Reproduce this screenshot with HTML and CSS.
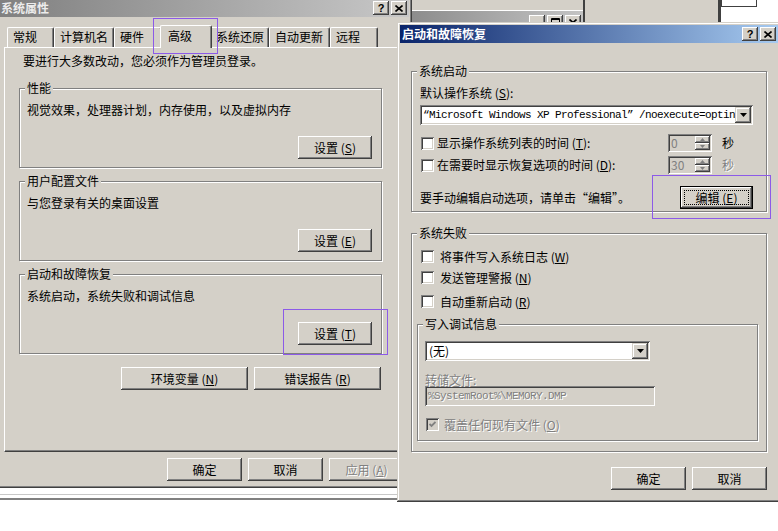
FILE: index.html
```html
<!DOCTYPE html>
<html lang="zh-CN">
<head>
    <meta charset="UTF-8">
    <meta name="viewport" content="width=device-width, initial-scale=1.0">
    <title>系统属性</title>
    <link rel="stylesheet" href="styles.css">
</head>
<body>
    <div class="desk">
        <!-- windows lying behind the two dialogs -->
        <div class="back back-gray"></div>
        <div class="back back-title">
            <span class="cap-btn"></span>
            <span class="cap-btn"><svg width="9" height="9" viewBox="0 0 9 9"><path d="M0.5 0.5h8v8h-8z M0.5 1.5h8" fill="none" stroke="#000"/></svg></span>
            <span class="cap-btn"><svg width="8" height="7" viewBox="0 0 8 7"><path d="M0.5 0.5L7.5 6.5M7.5 0.5L0.5 6.5" stroke="#000" stroke-width="1.6"/></svg></span>
        </div>
        <div class="back back-edge"></div>
        <div class="back back-frame"></div>
        <div class="back back-white"><div class="back-box"></div></div>
        <div class="back back-bottom"></div>

        <!-- 系统属性 -->
        <div class="win sys">
            <div class="titlebar inactive">
                <span class="title-text">系统属性</span>
                <span class="cap-btn">?</span>
                <span class="cap-btn"><svg width="8" height="7" viewBox="0 0 8 7"><path d="M0.5 0.5L7.5 6.5M7.5 0.5L0.5 6.5" stroke="#000" stroke-width="1.6"/></svg></span>
            </div>
            <div class="tabs">
                <div class="tab t-general">常规</div>
                <div class="tab t-name">计算机名</div>
                <div class="tab t-hw">硬件</div>
                <div class="tab t-adv active">高级</div>
                <div class="tab t-restore">系统还原</div>
                <div class="tab t-update">自动更新</div>
                <div class="tab t-remote">远程</div>
            </div>
            <div class="tab-panel">
                <p class="intro">要进行大多数改动，您必须作为管理员登录。</p>
                <div class="group adv-group first">
                    <span class="group-label">性能</span>
                    <p>视觉效果，处理器计划，内存使用，以及虚拟内存</p>
                    <div class="group-actions"><button class="btn btn-set">设置 (<u>S</u>)</button></div>
                </div>
                <div class="group adv-group">
                    <span class="group-label">用户配置文件</span>
                    <p>与您登录有关的桌面设置</p>
                    <div class="group-actions"><button class="btn btn-set">设置 (<u>E</u>)</button></div>
                </div>
                <div class="group adv-group">
                    <span class="group-label">启动和故障恢复</span>
                    <p>系统启动，系统失败和调试信息</p>
                    <div class="group-actions"><button class="btn btn-set">设置 (<u>T</u>)</button></div>
                </div>
                <div class="panel-actions">
                    <button class="btn btn-wide">环境变量 (<u>N</u>)</button>
                    <button class="btn btn-wide">错误报告 (<u>R</u>)</button>
                </div>
            </div>
            <div class="dialog-actions sys-actions">
                <button class="btn">确定</button>
                <button class="btn">取消</button>
                <button class="btn" disabled>应用 (<u>A</u>)</button>
            </div>
        </div>

        <!-- 启动和故障恢复 -->
        <div class="win recover">
            <div class="titlebar">
                <span class="title-text">启动和故障恢复</span>
                <span class="cap-btn">?</span>
                <span class="cap-btn"><svg width="8" height="7" viewBox="0 0 8 7"><path d="M0.5 0.5L7.5 6.5M7.5 0.5L0.5 6.5" stroke="#000" stroke-width="1.6"/></svg></span>
            </div>
            <div class="recover-body">
                <div class="group startup-group">
                    <span class="group-label">系统启动</span>
                    <p>默认操作系统 (<u>S</u>):</p>
                    <div class="combo os-combo">
                        <span class="combo-text mono">“Microsoft Windows XP Professional” /noexecute=optin</span>
                        <span class="drop"><svg width="7" height="4" viewBox="0 0 7 4"><path d="M0 0h7L3.5 4z" fill="#000"/></svg></span>
                    </div>
                    <div class="opt-row">
                        <span class="cb"></span>
                        <span class="opt-label">显示操作系统列表的时间 (<u>T</u>):</span>
                        <div class="spin">
                            <span class="spin-value">0</span>
                            <span class="spin-btns">
                                <span class="spin-btn"><svg width="5" height="3" viewBox="0 0 5 3"><path d="M2.5 0L5 3H0z" fill="#808080"/></svg></span>
                                <span class="spin-btn"><svg width="5" height="3" viewBox="0 0 5 3"><path d="M0 0h5L2.5 3z" fill="#808080"/></svg></span>
                            </span>
                        </div>
                        <span class="unit">秒</span>
                    </div>
                    <div class="opt-row second">
                        <span class="cb"></span>
                        <span class="opt-label">在需要时显示恢复选项的时间 (<u>D</u>):</span>
                        <div class="spin">
                            <span class="spin-value">30</span>
                            <span class="spin-btns">
                                <span class="spin-btn"><svg width="5" height="3" viewBox="0 0 5 3"><path d="M2.5 0L5 3H0z" fill="#808080"/></svg></span>
                                <span class="spin-btn"><svg width="5" height="3" viewBox="0 0 5 3"><path d="M0 0h5L2.5 3z" fill="#808080"/></svg></span>
                            </span>
                        </div>
                        <span class="unit disabled-text">秒</span>
                    </div>
                    <div class="edit-row">
                        <span>要手动编辑启动选项，请单击“编辑”。</span>
                        <button class="btn btn-default">编辑 (<u>E</u>)</button>
                    </div>
                </div>

                <div class="group failure-group">
                    <span class="group-label">系统失败</span>
                    <div class="cb-row"><span class="cb"></span><span class="cb-text">将事件写入系统日志 (<u>W</u>)</span></div>
                    <div class="cb-row alert"><span class="cb"></span><span class="cb-text">发送管理警报 (<u>N</u>)</span></div>
                    <div class="cb-row restart"><span class="cb"></span><span class="cb-text">自动重新启动 (<u>R</u>)</span></div>
                    <div class="group debug-group">
                        <span class="group-label">写入调试信息</span>
                        <div class="combo none-combo">
                            <span class="combo-text">(无)</span>
                            <span class="drop"><svg width="7" height="4" viewBox="0 0 7 4"><path d="M0 0h7L3.5 4z" fill="#000"/></svg></span>
                        </div>
                        <p class="dump-label disabled-text">转储文件:</p>
                        <div class="textbox mono disabled-text">%SystemRoot%\MEMORY.DMP</div>
                        <div class="cb-row overwrite">
                            <span class="cb checked"><svg width="7" height="7" viewBox="0 0 7 7"><path d="M0.5 3L2.5 5L6.5 1" fill="none" stroke="#808080" stroke-width="1.8"/></svg></span>
                            <span class="cb-text disabled-text">覆盖任何现有文件 (<u>O</u>)</span>
                        </div>
                    </div>
                </div>

                <div class="dialog-actions recover-actions">
                    <button class="btn">确定</button>
                    <button class="btn">取消</button>
                </div>
            </div>
        </div>

        <!-- purple highlight frames -->
        <div class="mark mark-tab"></div>
        <div class="mark mark-startup"></div>
        <div class="mark mark-edit"></div>
    </div>
</body>
</html>
```

FILE: styles.css
```css
body {
    margin: 0;
    background: #fff;
    font-family: "Noto Sans CJK SC", "Liberation Sans", sans-serif;
    font-size: 12px;
    line-height: 12px;
    color: #000;
}
p {
    margin: 0;
}
.desk {
    position: relative;
    width: 778px;
    height: 531px;
    overflow: hidden;
}

/* background windows */
.back {
    position: absolute;
}
.back-gray {
    left: 400px;
    top: 0;
    width: 320px;
    height: 24px;
    background: #d4d0c8;
}
.back-title {
    left: 410px;
    top: 10px;
    width: 173px;
    height: 14px;
    box-sizing: border-box;
    display: flex;
    justify-content: flex-end;
    padding: 4px 2px 0 0;
    border-top: 1px solid #fff;
    background: linear-gradient(to right, #8c8c8c, #c4c4c4);
}
.back-edge {
    left: 583px;
    top: 0;
    width: 2px;
    height: 24px;
    background: #404040;
}
.back-frame {
    left: 718px;
    top: 0;
    width: 3px;
    height: 24px;
    background: #404040;
}
.back-white {
    left: 721px;
    top: 0;
    width: 57px;
    height: 24px;
    background: #fff;
}
.back-box {
    width: 36px;
    height: 8px;
    margin-top: -1px;
    box-sizing: border-box;
    border: 1px solid #404040;
}
.back-bottom {
    left: 0;
    top: 494px;
    width: 397px;
    height: 6px;
    box-sizing: border-box;
    border-top: 1px solid #c8c8c8;
    border-bottom: 2px solid #808080;
}

/* window frame */
.win {
    position: absolute;
    box-sizing: border-box;
    padding: 3px;
    background: #d4d0c8;
    box-shadow: inset -1px -1px #404040, inset 1px 1px #d4d0c8, inset -2px -2px #808080, inset 2px 2px #fff;
}
.sys {
    left: -4px;
    top: -4px;
    width: 416px;
    height: 492px;
}
.recover {
    left: 397px;
    top: 22px;
    width: 384px;
    height: 480px;
}
.titlebar {
    display: flex;
    align-items: center;
    height: 18px;
    padding: 0 2px;
    background: linear-gradient(to right, #0a246a, #a6caf0);
    color: #fff;
    font-weight: bold;
}
.titlebar.inactive {
    background: linear-gradient(to right, #808080, #c8c8c8);
    color: #ececec;
}
.title-text {
    flex: 1;
}
.cap-btn {
    display: flex;
    align-items: center;
    justify-content: center;
    width: 16px;
    height: 14px;
    margin-left: 2px;
    box-sizing: border-box;
    background: #d4d0c8;
    color: #000;
    font: bold 11px/11px "Liberation Sans", sans-serif;
    box-shadow: inset -1px -1px #404040, inset 1px 1px #fff, inset -2px -2px #808080;
}

/* tabs */
.tabs {
    display: flex;
    align-items: flex-end;
    height: 22px;
    margin: 8px 0 0 8px;
}
.tab {
    box-sizing: border-box;
    height: 20px;
    padding: 3px 0 0 5px;
    border-top: 1px solid #fff;
    border-left: 1px solid #fff;
    border-right: 1px solid #404040;
    border-radius: 2px 2px 0 0;
    box-shadow: inset -1px 0 #808080;
    white-space: nowrap;
}
.tab.active {
    position: relative;
    z-index: 1;
    height: 23px;
    margin: 0 -2px -1px;
    padding: 4px 0 0 7px;
    background: #d4d0c8;
}
.t-general { width: 47px; }
.t-name { width: 60px; }
.t-hw { width: 48px; }
.t-adv { width: 52px; }
.t-restore { width: 59px; }
.t-update { width: 61px; }
.t-remote { width: 48px; }
.tab-panel {
    box-sizing: border-box;
    width: 401px;
    height: 405px;
    margin-left: 5px;
    padding: 7px 0 0 14px;
    border: 1px solid;
    border-color: #fff #404040 #404040 #fff;
    box-shadow: inset -1px -1px #808080;
}
.intro {
    margin-left: 4px;
}

/* group boxes */
.group {
    position: relative;
    box-sizing: border-box;
    border: 1px solid #808080;
    box-shadow: inset 1px 1px #fff, 1px 1px #fff;
}
.group-label {
    position: absolute;
    top: -7px;
    left: 5px;
    padding: 0 2px;
    background: #d4d0c8;
    white-space: nowrap;
}
.adv-group {
    width: 363px;
    margin-top: 13px;
    padding: 15px 9px 8px 7px;
}
.adv-group.first {
    margin-top: 21px;
}
.group-actions {
    display: flex;
    justify-content: flex-end;
    margin-top: 20px;
}
.panel-actions {
    display: flex;
    justify-content: flex-end;
    gap: 6px;
    width: 362px;
    margin-top: 13px;
}

/* buttons */
.btn {
    box-sizing: border-box;
    width: 75px;
    height: 23px;
    padding: 0;
    border: 0;
    background: #d4d0c8;
    color: #000;
    font: 12px/12px "Noto Sans CJK SC", sans-serif;
    box-shadow: inset -1px -1px #404040, inset 1px 1px #fff, inset -2px -2px #808080;
}
.btn:disabled {
    color: #808080;
    text-shadow: 1px 1px #fff;
}
.btn-set {
    width: 74px;
}
.btn-wide {
    width: 127px;
}
.btn-default {
    position: relative;
    width: 73px;
    box-shadow: inset 0 0 0 1px #000, inset -2px -2px #404040, inset 2px 2px #fff, inset -3px -3px #808080;
}
.btn-default::after {
    content: "";
    position: absolute;
    left: 4px;
    top: 4px;
    right: 4px;
    bottom: 4px;
    border: 1px dotted #000;
}
.dialog-actions {
    display: flex;
    justify-content: flex-end;
    gap: 6px;
}
.sys-actions {
    width: 400px;
    margin: 6px 0 0 5px;
}
.recover-actions {
    width: 356px;
    margin-top: 15px;
}

/* recovery dialog */
.recover-body {
    padding: 0 11px;
}
.startup-group {
    width: 356px;
    margin-top: 28px;
    padding: 15px 12px 2px 8px;
}
.combo {
    display: flex;
    box-sizing: border-box;
    height: 20px;
    padding: 2px;
    background: #fff;
    box-shadow: inset 1px 1px #808080, inset -1px -1px #fff, inset 2px 2px #404040, inset -2px -2px #d4d0c8;
}
.combo-text {
    flex: 1;
    overflow: hidden;
    padding-left: 2px;
    line-height: 16px;
    white-space: nowrap;
}
.os-combo {
    width: 333px;
    margin-top: 6px;
}
.os-combo .combo-text {
    padding-left: 1px;
}
.drop {
    display: flex;
    align-items: center;
    justify-content: center;
    width: 16px;
    height: 16px;
    background: #d4d0c8;
    box-shadow: inset -1px -1px #404040, inset 1px 1px #d4d0c8, inset -2px -2px #808080, inset 2px 2px #fff;
}
.mono {
    font-family: "Liberation Mono", monospace;
    font-size: 11px;
    letter-spacing: -0.6px;
}
.opt-row {
    display: flex;
    align-items: center;
    height: 18px;
    margin-top: 9px;
}
.opt-row.second {
    margin-top: 4px;
}
.opt-row .cb {
    margin-left: 1px;
}
.opt-label {
    width: 231px;
    margin-left: 3px;
    white-space: nowrap;
}
.spin {
    display: flex;
    box-sizing: border-box;
    width: 44px;
    height: 18px;
    padding: 2px;
    background: #d4d0c8;
    box-shadow: inset 1px 1px #808080, inset -1px -1px #fff, inset 2px 2px #404040, inset -2px -2px #d4d0c8;
}
.spin-value {
    flex: 1;
    padding-left: 1px;
    line-height: 14px;
    color: #808080;
}
.spin-btns {
    display: flex;
    flex-direction: column;
    width: 15px;
}
.spin-btn {
    display: flex;
    flex: 1;
    align-items: center;
    justify-content: center;
    box-shadow: inset -1px -1px #404040, inset 1px 1px #fff, inset -2px -2px #808080;
}
.unit {
    margin-left: 10px;
}
.disabled-text {
    color: #808080;
    text-shadow: 1px 1px #fff;
}
.edit-row {
    display: flex;
    align-items: center;
    justify-content: space-between;
    width: 333px;
    margin-top: 12px;
}
.cb {
    display: flex;
    flex: none;
    align-items: center;
    justify-content: center;
    box-sizing: border-box;
    width: 13px;
    height: 13px;
    background: #fff;
    box-shadow: inset 1px 1px #808080, inset -1px -1px #fff, inset 2px 2px #404040, inset -2px -2px #d4d0c8;
}
.cb.checked {
    background: #d4d0c8;
}
.failure-group {
    width: 356px;
    margin-top: 21px;
    padding: 16px 9px 10px 5px;
}
.cb-row {
    display: flex;
    align-items: center;
    height: 13px;
    margin-left: 4px;
}
.cb-text {
    margin-left: 6px;
    white-space: nowrap;
}
.cb-row.alert {
    margin-top: 8px;
}
.cb-row.restart {
    margin-top: 11px;
}
.debug-group {
    width: 341px;
    margin-top: 16px;
    padding: 16px 7px 9px 7px;
}
.none-combo {
    width: 225px;
}
.dump-label {
    margin-top: 13px;
}
.textbox {
    box-sizing: border-box;
    width: 230px;
    height: 20px;
    padding: 2px 3px;
    line-height: 16px;
    background: #d4d0c8;
    box-shadow: inset 1px 1px #808080, inset -1px -1px #fff, inset 2px 2px #404040, inset -2px -2px #d4d0c8;
}
.cb-row.overwrite {
    margin: 12px 0 0 1px;
}
.overwrite .cb-text {
    margin-left: 5px;
}

/* purple highlight frames */
.mark {
    position: absolute;
    box-sizing: border-box;
    border: 1px solid #8c5ae8;
}
.mark-tab {
    left: 153px;
    top: 18px;
    width: 65px;
    height: 36px;
}
.mark-startup {
    left: 283px;
    top: 309px;
    width: 105px;
    height: 46px;
}
.mark-edit {
    left: 652px;
    top: 175px;
    width: 119px;
    height: 44px;
}
```
